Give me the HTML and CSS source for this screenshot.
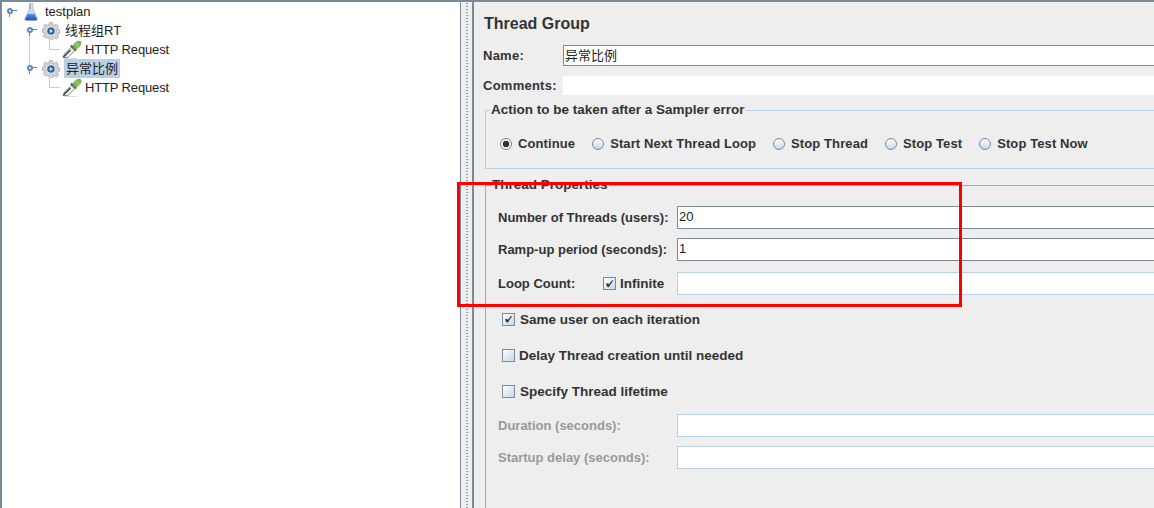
FILE: index.html
```html
<!DOCTYPE html>
<html lang="en">
<head>
    <meta charset="UTF-8">
    <meta name="viewport" content="width=device-width, initial-scale=1.0">
    <title>Thread Group</title>
    <link rel="stylesheet" href="styles.css">
</head>
<body>
    <svg class="defs" width="0" height="0">
        <defs>
            <linearGradient id="glass" x1="0" y1="0" x2="0" y2="1">
                <stop offset="0" stop-color="#dfe6f2"/>
                <stop offset="1" stop-color="#b4c4dc"/>
            </linearGradient>
            <linearGradient id="liquid" x1="0" y1="0" x2="0" y2="1">
                <stop offset="0" stop-color="#4d8fe8"/>
                <stop offset="1" stop-color="#1a56c4"/>
            </linearGradient>
            <linearGradient id="bulb" x1="0" y1="0" x2="1" y2="0">
                <stop offset="0" stop-color="#5c9a42"/>
                <stop offset=".5" stop-color="#8fca6c"/>
                <stop offset="1" stop-color="#6aa84e"/>
            </linearGradient>
            <symbol id="flask" viewBox="0 0 14 18">
                <path d="M5.500 .5h3.500v5.500l4.300 9.600c.4 1-.2 1.900-1.200 1.900H2c-1 0-1.600-.9-1.200-1.900L5.500 6z" fill="url(#glass)" stroke="#a8b2c2" stroke-width=".8"/>
                <path d="M3.600 11h6.900l2.300 5c.2.600-.2 1.200-.9 1.200H2.200c-.7 0-1.100-.6-.9-1.200z" fill="url(#liquid)"/>
                <path d="M6 1v5" stroke="#7e8a9c" stroke-width="1"/>
            </symbol>
            <symbol id="gear" viewBox="0 0 18 18">
                <path d="M7.500 .5h3l.4 2.200 1.600.7L14.400 2l2.100 2.100-1.300 1.900.7 1.600 2.100.4v3l-2.100.4-.7 1.600 1.300 1.900-2.100 2.100-1.900-1.300-1.600.7-.4 2.100h-3l-.4-2.100-1.600-.7L3.600 16l-2.100-2.100 1.300-1.900-.7-1.600L0 10V7l2.100-.4.7-1.600L1.500 4.100 3.600 2l1.900 1.300 1.600-.7z" fill="#d4d6da" stroke="#a0a4aa" stroke-width=".8"/>
                <circle cx="9" cy="9" r="5.200" fill="#f4f5f6" stroke="#b0b4ba" stroke-width=".6"/>
                <circle cx="9" cy="9" r="3.800" fill="#35669f"/>
                <path d="M7.800 7v4l3.200-2z" fill="#dce8f4"/>
            </symbol>
            <symbol id="dropper" viewBox="0 0 20 19">
                <path d="M2 18.500h13" stroke="#dddddd" stroke-width="1"/>
                <path d="M1 17.500l1.500-3.500 7-7 3.500 3.500-7 7z" fill="#eceded" stroke="#6a6d72" stroke-width=".8"/>
                <path d="M1.500 17l7-7" stroke="#34363a" stroke-width="1.300"/>
                <path d="M9 5.500l5 5" stroke="#46523f" stroke-width="2"/>
                <ellipse cx="15" cy="5" rx="5.200" ry="3.300" transform="rotate(-45 15 5)" fill="url(#bulb)"/>
            </symbol>
        </defs>
    </svg>

    <div class="app">
        <div class="tree">
            <div class="tree-row root">
                <span class="handle"></span>
                <svg class="icon-flask"><use href="#flask"/></svg>
                <span class="tree-label">testplan</span>
            </div>
            <div class="tree-row group has-line">
                <span class="handle"></span>
                <svg class="icon-gear"><use href="#gear"/></svg>
                <span class="tree-label cjk">线程组RT</span>
            </div>
            <div class="tree-row leaf">
                <span class="elbow"></span>
                <svg class="icon-dropper"><use href="#dropper"/></svg>
                <span class="tree-label">HTTP Request</span>
            </div>
            <div class="tree-row group">
                <span class="handle"></span>
                <svg class="icon-gear"><use href="#gear"/></svg>
                <span class="tree-label cjk selected">异常比例</span>
            </div>
            <div class="tree-row leaf">
                <span class="elbow"></span>
                <svg class="icon-dropper"><use href="#dropper"/></svg>
                <span class="tree-label">HTTP Request</span>
            </div>
        </div>

        <div class="splitter"></div>

        <div class="panel">
            <div class="form">
                <h1 class="title">Thread Group</h1>

                <div class="name-row">
                    <label class="name-label">Name:</label>
                    <div class="field cjk">异常比例</div>
                </div>
                <div class="comment-row">
                    <label class="name-label">Comments:</label>
                    <div class="field plain"></div>
                </div>

                <fieldset class="box error-box">
                    <legend>Action to be taken after a Sampler error</legend>
                    <div class="radios">
                        <span class="radio-item on"><span class="radio"></span>Continue</span>
                        <span class="radio-item"><span class="radio"></span>Start Next Thread Loop</span>
                        <span class="radio-item"><span class="radio"></span>Stop Thread</span>
                        <span class="radio-item"><span class="radio"></span>Stop Test</span>
                        <span class="radio-item"><span class="radio"></span>Stop Test Now</span>
                    </div>
                </fieldset>

                <fieldset class="box props-box">
                    <legend>Thread Properties</legend>
                    <div class="prop-row first">
                        <label class="prop-label">Number of Threads (users):</label>
                        <div class="field">20</div>
                    </div>
                    <div class="prop-row second">
                        <label class="prop-label">Ramp-up period (seconds):</label>
                        <div class="field">1</div>
                    </div>
                    <div class="prop-row loop">
                        <label class="prop-label loop-label">Loop Count:</label>
                        <span class="check-item inline"><span class="check on"></span>Infinite</span>
                        <div class="field disabled"></div>
                    </div>

                    <div class="check-row same"><span class="check on"></span>Same user on each iteration</div>
                    <div class="check-row"><span class="check"></span><span class="tight">Delay Thread creation until needed</span></div>
                    <div class="check-row"><span class="check"></span>Specify Thread lifetime</div>

                    <div class="prop-row muted duration">
                        <label class="prop-label">Duration (seconds):</label>
                        <div class="field disabled"></div>
                    </div>
                    <div class="prop-row muted startup">
                        <label class="prop-label">Startup delay (seconds):</label>
                        <div class="field disabled"></div>
                    </div>
                </fieldset>
            </div>
        </div>
    </div>

    <div class="red-box"></div>
</body>
</html>
```

FILE: styles.css
```css
* { box-sizing: border-box; }

body {
    margin: 0;
    width: 1154px;
    height: 508px;
    overflow: hidden;
    position: relative;
    font-family: "Liberation Sans", Arial, "Noto Sans CJK SC", sans-serif;
    font-size: 13.5px;
    color: #333333;
    background: #eeeeee;
}

.defs { position: absolute; }

.app {
    display: flex;
    height: 508px;
    border-top: 2px solid #7a8a99;
}

/* left tree */
.tree {
    width: 461px;
    flex-shrink: 0;
    background: #fff;
    border-left: 2px solid #7a8a99;
    border-right: 1px solid #7a8a99;
    font-size: 13px;
}

.tree-row {
    display: flex;
    align-items: center;
    height: 19px;
    position: relative;
    color: #222;
}
.tree-row.root { padding-left: 22px; }
.tree-row.group { padding-left: 40px; }
.tree-row.leaf { padding-left: 60px; letter-spacing: -.15px; }

.handle {
    position: absolute;
    width: 6px;
    height: 6px;
    top: 6px;
    border: 2px solid #5f85bd;
    border-radius: 50%;
    background: #fff;
}
.handle::after {
    content: "";
    position: absolute;
    left: 4px;
    top: 0;
    width: 4px;
    height: 1px;
    background: #5f85bd;
}
.handle::before {
    content: "";
    position: absolute;
    left: 0;
    top: 4px;
    width: 1px;
    height: 3px;
    background: #5f85bd;
}
.root .handle { left: 5px; }
.group .handle { left: 25px; }

.has-line::before {
    content: "";
    position: absolute;
    left: 27px;
    top: 9px;
    width: 1px;
    height: 38px;
    background: #b8cfe5;
}

.elbow {
    position: absolute;
    left: 47px;
    top: -2px;
    width: 11px;
    height: 12px;
    border-left: 1px solid #b8cfe5;
    border-bottom: 1px solid #b8cfe5;
}

.icon-flask { width: 14px; height: 18px; margin-right: 7px; }
.icon-gear { width: 18px; height: 18px; margin-right: 5px; }
.icon-dropper { width: 20px; height: 19px; margin-right: 3px; }

.tree-label { white-space: nowrap; line-height: 19px; }
.selected { background: #b8cfe5; padding: 0 2px; margin-left: -1px; }

/* divider between the panes */
.splitter {
    width: 13px;
    flex-shrink: 0;
    background: #eeeeee;
    border-right: 2px solid #7a8a99;
    position: relative;
}
.splitter::after {
    content: "";
    position: absolute;
    left: 5px;
    top: 0;
    bottom: 0;
    width: 2px;
    background-image: radial-gradient(#8a98a6 45%, transparent 50%);
    background-size: 2px 3px;
}

/* right panel */
.panel {
    flex: 1;
    overflow: hidden;
    padding: 12px 0 0 10px;
}
.form { width: 860px; }

.title {
    margin: 0 0 11px;
    font-size: 16px;
    line-height: 20px;
    font-weight: bold;
}

.name-row, .comment-row, .prop-row {
    display: flex;
    align-items: center;
}
.name-row { height: 21px; margin-bottom: 10px; }
.comment-row { height: 19px; }

.name-label {
    width: 79px;
    margin-left: -1px;
    margin-right: 1px;
    font-weight: bold;
    font-size: 13px;
    letter-spacing: .25px;
}

.field {
    flex: 1;
    height: 100%;
    background: #fff;
    border: 1px solid #7a8a99;
    padding-left: 1px;
    line-height: 20px;
    font-size: 13px;
    color: #222;
}
.field.plain { border: 0; }
.field.disabled { border-color: #b8cfe5; }

.box {
    margin: 0;
    padding: 0;
    min-width: 0;
    border: 1px solid #b8cfe5;
}
.box legend {
    padding: 0 1px;
    margin-left: 4px;
    font-weight: bold;
    line-height: 16px;
}

.error-box {
    margin: 7px 0 0 1px;
    height: 67px;
}
.radios {
    display: flex;
    align-items: center;
    padding: 18px 0 0 14px;
    font-weight: bold;
    font-size: 13px;
    letter-spacing: .1px;
    line-height: 16px;
}
.radio-item { display: flex; align-items: center; margin-right: 17px; }
.radio {
    width: 12px;
    height: 12px;
    margin-right: 6px;
    border-radius: 50%;
    border: 1px solid #7a8a99;
    background: linear-gradient(#fff, #c5d6e8);
}
.on .radio {
    background: radial-gradient(#333 0 3px, #e8edf3 3.500px);
}

.props-box {
    margin: 8px 0 0 1px;
    height: 340px;
    border-color: #a9a9a9;
}
.props-box legend { margin-left: 5px; }

.prop-row { margin-left: 12px; height: 23px; }
.prop-row.first { margin-top: 13px; }
.prop-row.second { margin-top: 9px; }
.prop-row.loop { margin-top: 11px; }
.prop-row.duration { margin-top: 15px; }
.prop-row.startup { margin-top: 9px; }

.prop-label {
    width: 179px;
    flex-shrink: 0;
    font-weight: bold;
    font-size: 13px;
    white-space: nowrap;
}
.loop-label { width: 105px; }
.muted .prop-label { color: #999999; }

.check-item, .check-row {
    display: flex;
    align-items: center;
    font-weight: bold;
    white-space: nowrap;
}
.check-item.inline { width: 74px; }
.check-item.inline .check { margin-right: 4px; }
.check-row { margin-left: 16px; height: 16px; margin-top: 20px; }
.check-row.same { margin-top: 16px; }
.tight { margin-left: -1px; }

.check {
    position: relative;
    width: 13px;
    height: 13px;
    margin-right: 5px;
    flex-shrink: 0;
    border: 1px solid #7a8a99;
    background: linear-gradient(135deg, #fff, #c5d6e8);
}
.check.on::after {
    content: "";
    position: absolute;
    left: 2px;
    top: 2px;
    width: 7px;
    height: 7px;
    background: #333;
    clip-path: polygon(0 55%, 30% 45%, 40% 65%, 90% 0, 100% 10%, 40% 100%, 20% 100%);
}

/* annotation drawn on top of the screenshot */
.red-box {
    position: absolute;
    left: 457px;
    top: 182px;
    width: 505px;
    height: 125px;
    border: 3px solid #ff0000;
}
```
